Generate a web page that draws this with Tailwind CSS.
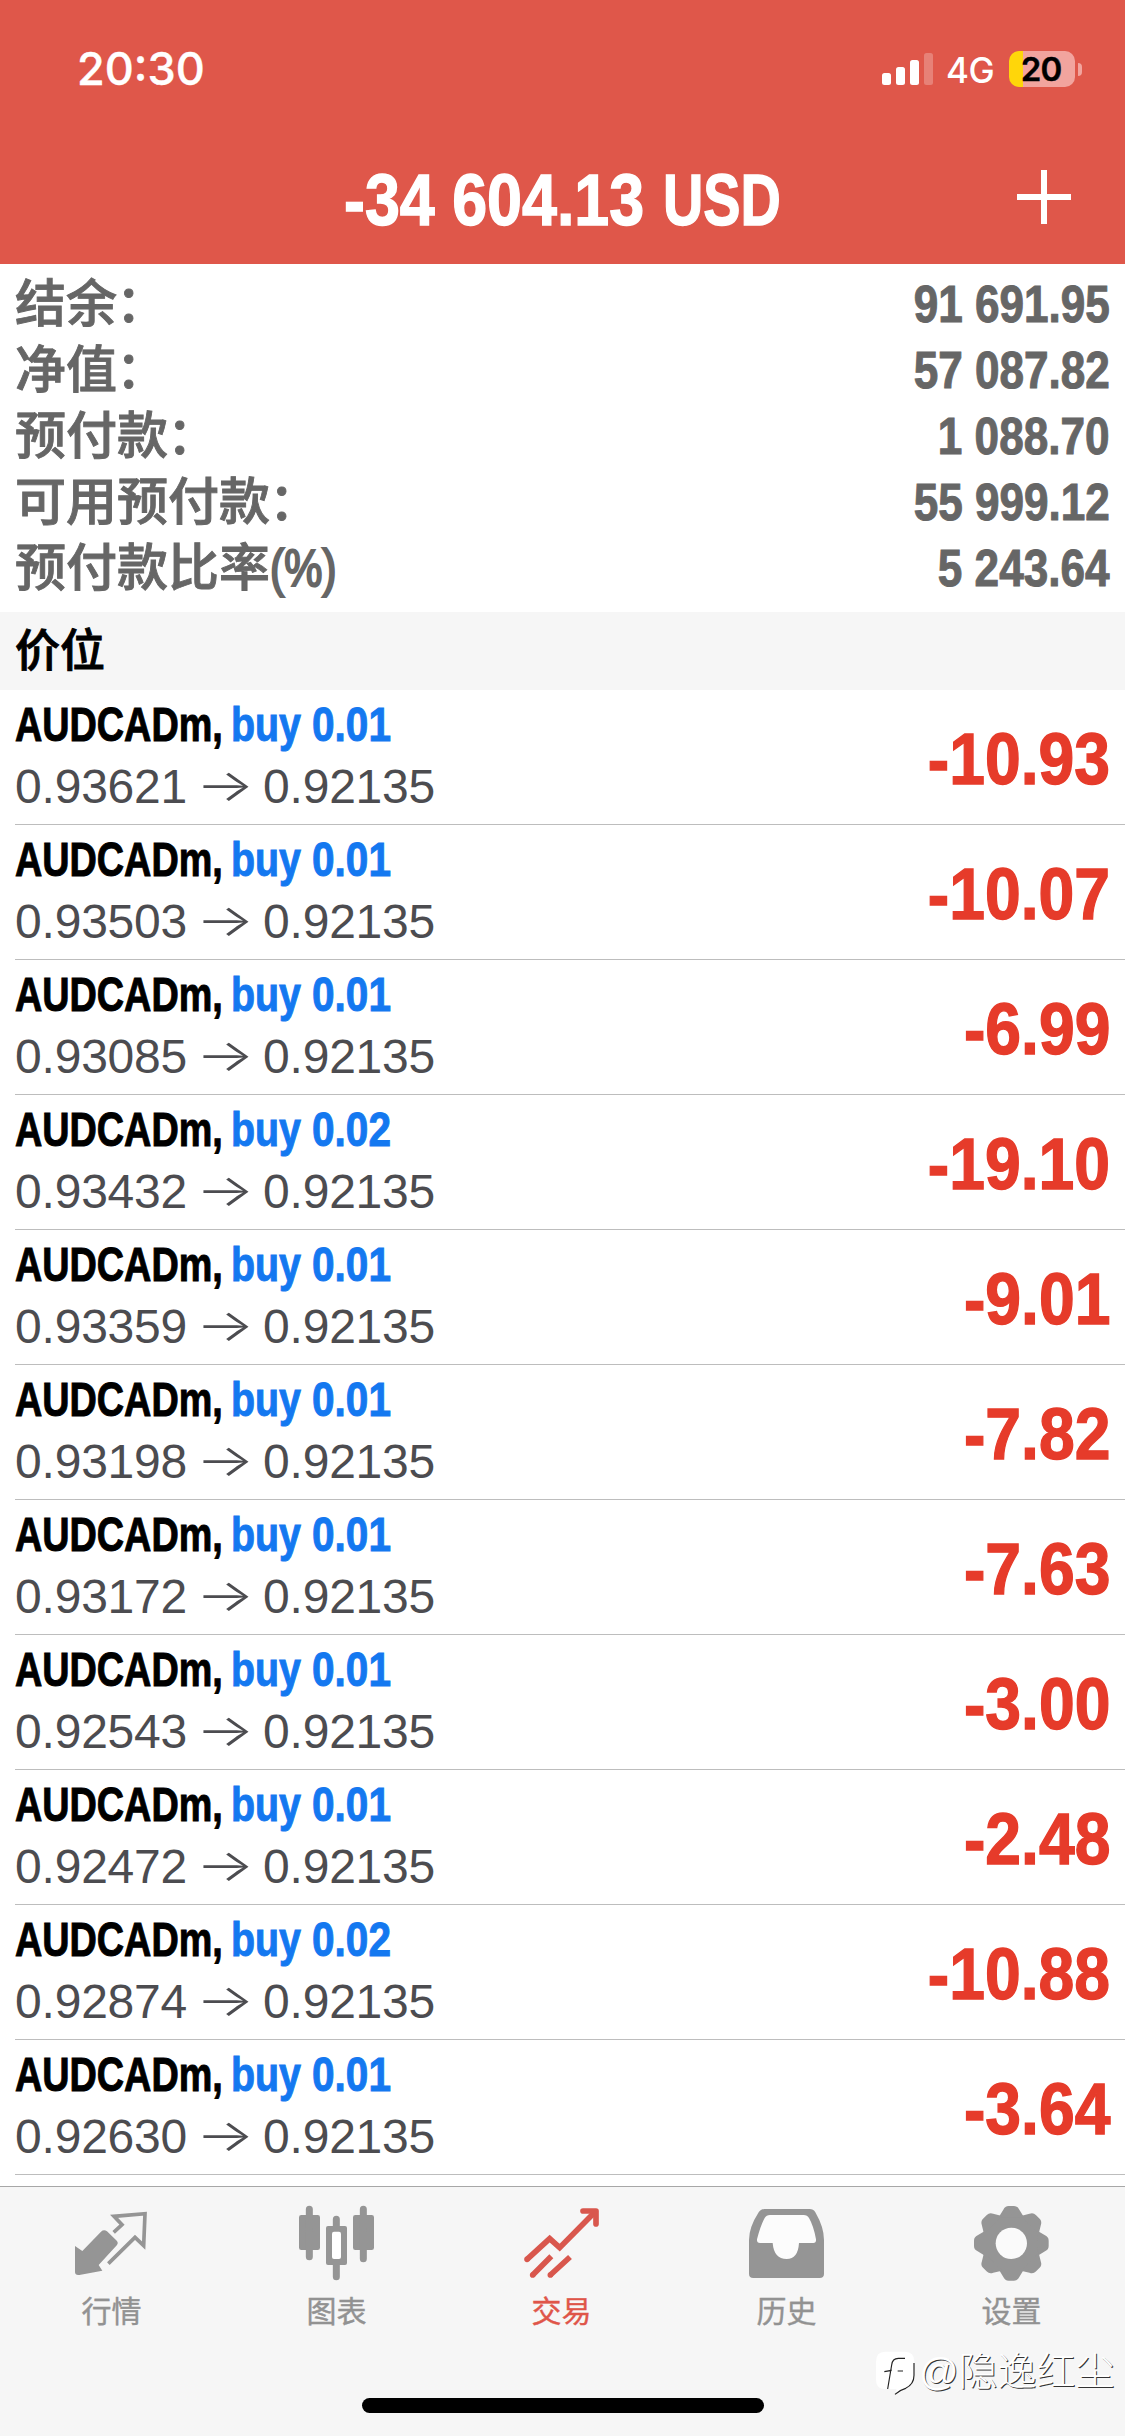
<!DOCTYPE html>
<html lang="zh"><head><meta charset="utf-8"><title>交易</title>
<script src="https://cdn.jsdelivr.net/npm/@tailwindcss/browser@4"></script></head>
<body class="w-[1125px] h-[2436px] overflow-hidden bg-white flex flex-col font-['Liberation_Sans','Noto_Sans_CJK_SC',sans-serif]">
<header class="h-[264px] shrink-0 bg-[#df574a] text-white flex flex-col">
  <div class="h-[138px] shrink-0 flex items-center justify-between pl-[77px] pr-[43px] font-['Inter',sans-serif]">
    <div class="text-[45px] font-medium [-webkit-text-stroke:0.4px_currentColor]">20:30</div>
    <div class="flex items-center">
      <svg class="w-[51px] h-[32px]" viewBox="0 0 51 32"><g fill="#fff"><rect x="0" y="20" width="9" height="12" rx="2.5"/><rect x="14" y="14" width="9" height="18" rx="2.5"/><rect x="28" y="7" width="9" height="25" rx="2.5"/><rect x="42" y="0" width="9" height="32" rx="2.5" opacity=".25"/></g></svg>
      <div class="ml-[13px] w-[50px] text-[35px] font-medium leading-none tracking-[-0.5px] pt-[2px]">4G</div>
      <div class="ml-[13px] w-[66px] h-[36px] rounded-[10px] bg-[linear-gradient(90deg,#ffd60a_14px,#f2a49e_14px)] text-black text-[33px] font-semibold leading-[37px] text-center tracking-[-1px] pr-[2px] [-webkit-text-stroke:0.4px_currentColor]">20</div>
      <div class="ml-[3px] w-[4px] h-[13px] rounded-r-full bg-[#f2a49e]"></div>
    </div>
  </div>
  <div class="h-[126px] grid grid-cols-[1fr_600px_1fr] items-center">
    <div></div>
    <div class="flex justify-center whitespace-nowrap text-[73px] leading-[80px] -mt-[3px] font-bold [-webkit-text-stroke:1.4px_currentColor]"><span class="w-[319px]"><span class="inline-block origin-left scale-x-[.86]">-34 604.13</span></span><span class="w-[119px]"><span class="inline-block origin-left scale-x-[.765]">USD</span></span></div>
    <svg class="w-[54px] h-[54px] justify-self-end mr-[54px] -mt-[9px]" viewBox="0 0 54 54"><path d="M27 0V54M0 27H54" stroke="#fff" stroke-width="6"/></svg>
  </div>
</header>
<section id="summary" class="h-[348px] shrink-0 pt-[8px] px-[15px] text-[#666]"></section>
<div class="h-[78px] shrink-0 bg-[#f6f6f6] px-[15px] pt-[2px] flex items-center text-[45px] leading-[76px] font-medium text-black [-webkit-text-stroke:0.9px_currentColor]">价位</div>
<main id="rows" class="h-[1496px] shrink-0"></main>
<nav class="h-[250px] shrink-0 bg-[#f6f6f6] border-t border-[#a7a7a7] relative flex flex-col">
  <div class="grid grid-cols-5 pt-[13px] text-[30px] leading-[43px] text-center text-[#929292] [-webkit-text-stroke:0.4px_currentColor]">
    <div><svg class="w-[225px] h-[90px]" viewBox="0 120 675 270" fill="#959595"><path d="M225 258L247 273L303 215Q312 207 321 214L351 243Q356 249 351 255L296 315L307 332L238 345Q226 347 225 337Z"/><path d="M341 217L366 194L342 169L435 161L431 257L405 232L325 311" fill="none" stroke="#959595" stroke-width="11"/></svg><div class="-ml-[2px]">行情</div></div>
    <div><svg class="w-[225px] h-[90px]" viewBox="675 120 675 270" fill="#959595"><rect x="897" y="165" width="63" height="105" rx="7"/><rect x="1059" y="165" width="63" height="105" rx="7"/><path d="M928 148V290M1090 148V296M1009 178V205M1009 308V350" stroke="#959595" stroke-width="21" stroke-linecap="round"/><path d="M984 198h51q6 0 6 6v105q0 6-6 6h-51q-6 0-6-6v-105q0-6 6-6z"/><rect x="996" y="215" width="27" height="82" rx="6" fill="#fff"/></svg><div class="-ml-[2px]">图表</div></div>
    <div class="text-[#df5549]"><svg class="w-[225px] h-[90px]" viewBox="150 120 675 270" fill="none" stroke="#d9574d" stroke-width="17"><path d="M381 298L449 236L479 263L584 157" stroke-linejoin="miter"/><path d="M381 298h.1M398 345h.1M451 345h.1" stroke-linecap="round"/><path d="M549 153H588V192" stroke-linecap="round" stroke-linejoin="round"/><path d="M398 345L454 289M451 345L510 291"/></svg><div class="-ml-[2px]">交易</div></div>
    <div><svg class="w-[225px] h-[90px]" viewBox="825 120 675 270" fill="#959595"><path d="M1093 147H1229Q1240 147 1246 157Q1272 202 1272 240V341Q1272 354 1259 354H1060Q1047 354 1047 341V240Q1047 202 1076 157Q1082 147 1093 147Z"/><path fill="#fcfcfc" d="M1110 165Q1099 165 1094 174Q1081 198 1071 238Q1070 249 1080 249H1118Q1122 297 1160 297Q1194 297 1197 249H1240Q1249 249 1248 238Q1241 198 1227 174Q1222 165 1211 165Z"/></svg><div class="-ml-[2px]">历史</div></div>
    <div><svg class="w-[225px] h-[90px]" viewBox="300 120 675 270"><g fill="#959595"><circle cx="634" cy="250" r="89"/><g id="gear"></g></g><circle cx="634" cy="250" r="47" fill="#fafafa"/></svg><div class="-ml-[2px]">设置</div></div>
  </div>
  <div class="absolute left-[362px] top-[211px] w-[402px] h-[15px] rounded-full bg-black"></div>
  <div class="absolute left-[875px] top-[160px] flex text-white">
    <svg class="w-[44px] h-[54px]" viewBox="0 0 132 162"><path d="M30 14H90Q118 14 118 44V88Q118 112 92 126L64 143V126H30Q3 126 3 98V44Q3 14 30 14Z" fill="#fff"/><path d="M117 48V85Q117 112 92 124Q72 130 60 142M90 34H70Q52 34 50 54L38 126M28 74L50 70M68 72H84" fill="none" stroke="#222" stroke-width="3.5"/></svg>
    <div class="text-[39px] leading-[50px] whitespace-nowrap font-light [text-shadow:1px_1px_0_#333]">@隐逸红尘</div>
  </div>
</nav>
<script>
const sum=[['结余','：','91 691.95'],['净值','：','57 087.82'],['预付款','：','1 088.70'],['可用预付款','：','55 999.12'],['预付款比率','(%)','5 243.64']];
document.getElementById('summary').innerHTML=sum.map(([a,b,v])=>`<div class="h-[66px] flex items-center justify-between"><div class="flex text-[51px] leading-[66px] font-medium [-webkit-text-stroke:0.9px_currentColor]"><span>${a}</span><span class="${b==='(%)'?'origin-left scale-x-[.84] text-[51px] [-webkit-text-stroke:2.2px_currentColor]':'-ml-[1px]'}">${b}</span></div><div class="text-[51px] leading-[66px] font-bold origin-right scale-x-[.865] [-webkit-text-stroke:1px_currentColor]">${v}</div></div>`).join('');
const rows=[['0.01','0.93621','-10.93'],['0.01','0.93503','-10.07'],['0.01','0.93085','-6.99'],['0.02','0.93432','-19.10'],['0.01','0.93359','-9.01'],['0.01','0.93198','-7.82'],['0.01','0.93172','-7.63'],['0.01','0.92543','-3.00'],['0.01','0.92472','-2.48'],['0.02','0.92874','-10.88'],['0.01','0.92630','-3.64']];
document.getElementById('rows').innerHTML=rows.map(([q,p,v])=>`<div class="h-[135px] ml-[15px] pr-[15px] border-b border-[#bdbdbd] flex justify-between"><div class="pt-[6px]"><div class="h-[60px] flex whitespace-nowrap text-[48px] leading-[58px] font-bold text-black [-webkit-text-stroke:1px_currentColor]"><span class="w-[216px]"><span class="inline-block origin-left scale-x-[.787]">AUDCADm,</span></span><span class="w-[81px] text-[#1478f0]"><span class="inline-block origin-left scale-x-[.82]">buy</span></span><span class="w-[90px] text-[#1478f0]"><span class="inline-block origin-left scale-x-[.845]">${q}</span></span></div><div class="h-[62px] flex items-center text-[48px] leading-[62px] tracking-[-0.2px] text-[#4c4c50]"><span class="w-[173px]">${p}</span><span class="w-[75px] flex justify-center"><span class="relative -left-px -top-[2px] font-['Inter',sans-serif] font-light text-[44px] scale-x-[1.4]">→</span></span><span>0.92135</span></div></div><div class="flex items-center pt-[3px] text-[73px] leading-[131px] font-bold text-[#e63b2a] origin-right scale-x-[.88] [-webkit-text-stroke:1.4px_currentColor]">${v}</div></div>`).join('');
document.getElementById('gear').innerHTML=[0,45,90,135,180,225,270,315].map(a=>`<path transform="rotate(${a} 634 250)" d="M596 172L610 149Q615 138 626 138H642Q653 138 658 149L672 172Z"/>`).join('');
</script>
</body></html>
